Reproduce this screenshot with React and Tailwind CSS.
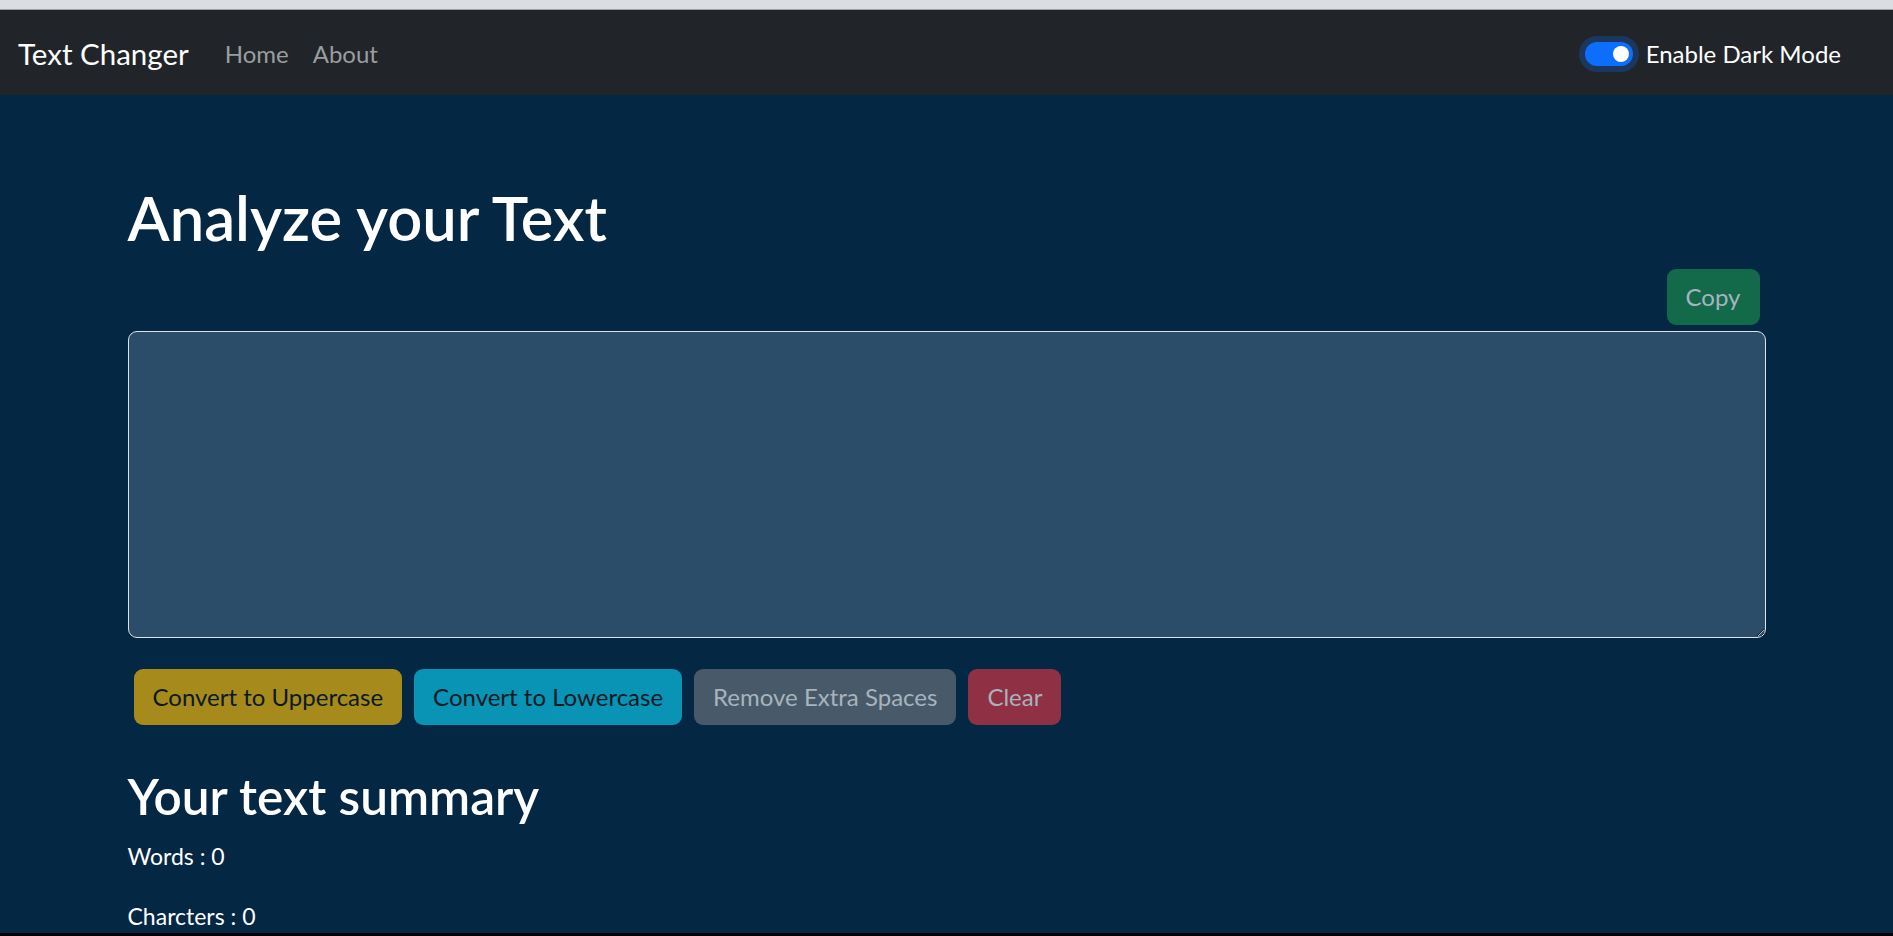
import { useState } from "react"

export default function App() {
  const [text, setText] = useState("")
  const [dark, setDark] = useState(true)

  const words = text.split(/\s+/).filter(w => w.length > 0).length

  const btn = "h-[56px] px-[19px] rounded-[9px] text-[24px] leading-none flex items-center"

  return (
    <div className="h-[936px] flex flex-col bg-[#042743] overflow-hidden" style={{ fontFamily: "Lato, sans-serif" }}>
      {/* browser chrome strip */}
      <div className="h-[10px] bg-[#dcdde1] border-b border-[#9fa0a4] shrink-0" />

      <nav className="h-[85px] shrink-0 bg-[#212529] flex items-center pl-[18px] pr-[52px] pt-[2px]">
        <a href="#" className="text-white text-[29.5px] leading-[1.2]">Text Changer</a>
        <ul className="flex ml-[24px]">
          <li><a href="#" className="px-[12px] text-[24px] text-[#9b9d9f]">Home</a></li>
          <li><a href="#" className="px-[12px] text-[24px] text-[#9b9d9f]">About</a></li>
        </ul>
        <div className="ml-auto flex items-center gap-[13px]">
          <button
            onClick={() => setDark(!dark)}
            className={`w-[48px] h-[24px] rounded-full flex items-center px-[4px] ring-[6px] ring-[#1c375e] ${dark ? "bg-[#0d6efd] justify-end" : "bg-[#212529] border border-gray-500 justify-start"}`}
          >
            <span className="w-[16px] h-[16px] rounded-full bg-white" />
          </button>
          <label className="text-white text-[24px]">Enable Dark Mode</label>
        </div>
      </nav>

      <main className="flex-1 w-[1638px] mx-auto">
        <h1 className="mt-[86px] text-white text-[61.5px] leading-[1.2] font-semibold">Analyze your Text</h1>

        <div className="flex justify-end mt-[14px] pr-[6px]">
          <button disabled className={`${btn} bg-[#136a4b] text-[#a7b3bd]`}>Copy</button>
        </div>

        <textarea
          value={text}
          onChange={e => setText(e.target.value)}
          className="block mt-[6px] w-full h-[307px] bg-[#2b4d6a] border border-[#dee2e6] rounded-[9px] text-white text-[23px] p-[10px] outline-none"
        />

        <div className="flex gap-[12px] mt-[31px] pl-[6px]">
          <button className={`${btn} bg-[#a78a1c] text-[#0b1a22]`}>Convert to Uppercase</button>
          <button className={`${btn} bg-[#0993b5] text-[#0b1a22]`}>Convert to Lowercase</button>
          <button className={`${btn} bg-[#485a69] text-[#a7b3bd]`}>Remove Extra Spaces</button>
          <button className={`${btn} bg-[#903044] text-[#a7b3bd]`} onClick={() => setText("")}>Clear</button>
        </div>

        <h2 className="mt-[42px] text-white text-[49.5px] leading-[1.2] font-semibold">Your text summary</h2>
        <p className="mt-[13px] text-white text-[23px] leading-[1.5]">Words : {words}</p>
        <p className="mt-[25px] text-white text-[23px] leading-[1.5]">Charcters : {text.length}</p>
      </main>

      <div className="h-[3px] bg-black shrink-0" />
    </div>
  )
}
